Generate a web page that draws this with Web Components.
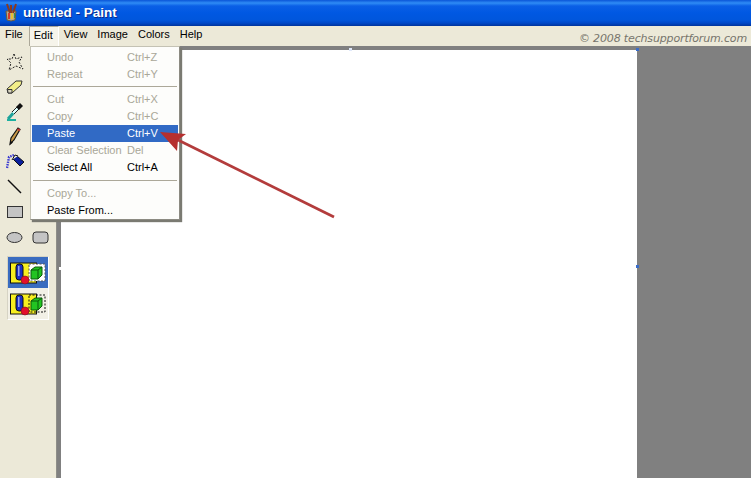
<!DOCTYPE html>
<html>
<head>
<meta charset="utf-8">
<title>untitled - Paint</title>
<style>
html, body { margin: 0; height: 100%; overflow: hidden; background: #808080; }
body { font: 11px "Liberation Sans", Arial, sans-serif; }
</style>
</head>
<body>
<paint-app>
  <title-bar>untitled - Paint</title-bar>
  <menu-bar></menu-bar>
  <tool-box></tool-box>
  <canvas-area></canvas-area>
  <edit-menu>
    <menu-item disabled keys="Ctrl+Z">Undo</menu-item>
    <menu-item disabled keys="Ctrl+Y">Repeat</menu-item>
    <menu-sep></menu-sep>
    <menu-item disabled keys="Ctrl+X">Cut</menu-item>
    <menu-item disabled keys="Ctrl+C">Copy</menu-item>
    <menu-item active keys="Ctrl+V">Paste</menu-item>
    <menu-item disabled keys="Del">Clear Selection</menu-item>
    <menu-item keys="Ctrl+A">Select All</menu-item>
    <menu-sep style="height:9px;padding-top:4px"></menu-sep>
    <menu-item disabled>Copy To...</menu-item>
    <menu-item>Paste From...</menu-item>
  </edit-menu>
</paint-app>

<script>
function define(name, html, extra) {
    customElements.define(name, class extends HTMLElement {
        constructor() {
            super();
            this.attachShadow({ mode: "open" });
            this.shadowRoot.innerHTML = html;
        }
        connectedCallback() {
            if (extra) extra(this);
        }
    });
}

define("paint-app", `
<style>
:host { display: grid; grid-template-columns: 56px 1fr; grid-template-rows: 26px 20px 1fr; width: 751px; height: 478px; position: relative; overflow: hidden; }
::slotted(title-bar), ::slotted(menu-bar) { grid-column: 1 / 3; }
svg { position: absolute; left: 0; top: 0; pointer-events: none; }
</style>
<slot></slot>
<svg width="751" height="478" viewBox="0 0 751 478">
  <line x1="334" y1="217" x2="176" y2="139" stroke="#b33c3c" stroke-width="2.8"/>
  <path d="M160 132 L186 134 L178 140 L177 151 Z" fill="#b5302f"/>
</svg>`);

define("title-bar", `
<style>
:host { display: flex; align-items: center; gap: 4px; height: 26px; padding: 0 0 2px 3px; box-sizing: border-box;
  background: linear-gradient(#0a55d8 0, #2f8cf5 3px, #0a5fe6 6px, #0058e2 13px, #0056dc 20px, #0048c8 23px, #00349c 26px);
  color: #fff; font: bold 13.5px "Liberation Sans", Arial, sans-serif; text-shadow: 1px 1px 0 #0a2c8c; }
svg { flex: none; }
</style>
<svg width="16" height="19" viewBox="0 0 16 19">
  <path d="M3 8 H13 L12 17 Q8 19 4 17 Z" fill="#b9a98a" stroke="#6a5a3a"/>
  <path d="M4 1 L7 10 M8 2 L8 10 M13 1 L10 10" stroke="#8a3b20" stroke-width="2"/>
  <path d="M5 10 H7 V16 H5 Z" fill="#d63a2a"/><path d="M8 10 H10 V16 H8 Z" fill="#e8c030"/><path d="M11 10 H12 V15 H11 Z" fill="#2f9a4a"/>
</svg>
<span><slot></slot></span>`);

define("menu-bar", `
<style>
:host { display: flex; align-items: flex-start; height: 20px; background: #ece9d8; position: relative;
  font: 11px "Liberation Sans", Arial, sans-serif; color: #000; }
b { font-weight: normal; padding: 0 5px; line-height: 17px; height: 18px; }
.open { background: #f6f4ea; border: solid #aca899; border-width: 1px 0 0 1px; border-right: 1px solid #fff; height: 19px; line-height: 16px; padding: 0 5px 0 4px; margin-left: 1px; }
.note { margin-left: auto; padding: 6px 4px 0 0; color: #77756c; font: italic 11px "DejaVu Sans", sans-serif; letter-spacing: -.15px; }
</style>
<b style="padding-left:5px">File</b><b class="open">Edit</b><b>View</b><b>Image</b><b>Colors</b><b>Help</b>
<span class="note">© 2008 techsupportforum.com</span>`);

define("tool-box", `
<style>
:host { display: block; background: #ece9d8; position: relative; }
.row { display: flex; gap: 9px; height: 25px; padding-left: 6px; align-items: center; }
.stack { margin: 6px 0 0 7px; width: 42px; height: 64px; border: 1px solid #f8f7f0; border-color: #d6d3c4 #fff #fff #d6d3c4; box-sizing: border-box; background: #f2f0e6; }
.stack div { height: 31px; display: flex; align-items: center; justify-content: center; }
.stack .on { background: #3a6cc0; }
</style>
<div style="height:3px"></div>
<div class="row">
  <svg width="18" height="18" viewBox="0 0 18 18"><path d="M8 1 L10 6 L16 4 L13 9 L17 16 L10 13 L3 17 L5 10 L1 6 L6 6 Z" fill="none" stroke="#222" stroke-dasharray="2 1.5"/></svg>
</div>
<div class="row">
  <svg width="18" height="16" viewBox="0 0 18 16"><path d="M1 10 L10 2 H16 L15 6 L6 14 H2 Z" fill="#f2ee88" stroke="#333"/><path d="M1.5 10.5 H6 L6 14 H2 Z" fill="#d8d4c0" stroke="#333"/></svg>
</div>
<div class="row">
  <svg width="18" height="20" viewBox="0 0 18 20"><path d="M2 17 L10 8" stroke="#1fa39a" stroke-width="3"/><path d="M1 18 H10" stroke="#1cb0a0" stroke-width="2"/><path d="M6 10 L12 4 L14 6 L8 12" fill="#dff" stroke="#222"/><path d="M10 5 L14 1 L17 4 L13 8 Z" fill="#111"/></svg>
</div>
<div class="row" style="margin-top:-1px">
  <svg width="18" height="20" viewBox="0 0 18 20"><path d="M4 18 L5 12 L12 2 L14 3.5 L8 14 Z" fill="#c99a4a" stroke="#111" stroke-width="1.2"/><path d="M4 19 L4.6 15 L7 16.5 Z" fill="#111"/><path d="M11.5 3 L14 4.5" stroke="#c33" stroke-width="1.6"/></svg>
</div>
<div class="row" style="padding-top:2px;height:23px">
  <svg width="20" height="16" viewBox="0 0 20 16"><path d="M1 14 L3 3 L8 1" fill="none" stroke="#3a3ad0" stroke-width="2.4" stroke-dasharray="1.5 1"/><path d="M7 5 L11 2 L18 8 L14 12 Z" fill="#0a1f9c" stroke="#111"/><path d="M6 6 L9 1 L12 2" fill="#eee" stroke="#111"/></svg>
</div>
<div class="row" style="margin-top:1px">
  <svg width="18" height="18" viewBox="0 0 18 18"><line x1="2" y1="2" x2="15" y2="15" stroke="#111" stroke-width="1.4"/></svg>
</div>
<div class="row">
  <svg width="18" height="14" viewBox="0 0 18 14"><rect x="1.5" y="1.5" width="15" height="11" fill="#c4c4c4" stroke="#333"/></svg>
</div>
<div class="row" style="margin-top:1px">
  <svg width="17" height="13" viewBox="0 0 17 13"><ellipse cx="8.5" cy="6.5" rx="7.5" ry="5" fill="#c4c4c4" stroke="#333"/></svg>
  <svg width="17" height="13" viewBox="0 0 17 13"><rect x="1" y="1" width="15" height="11" rx="3" fill="#c4c4c4" stroke="#333"/></svg>
</div>
<div class="stack">
  <div class="on"><sel-art boxed></sel-art></div>
  <div><sel-art></sel-art></div>
</div>`);

define("sel-art", `
<style>:host { display: block; width: 36px; height: 26px; } svg { display: block; }</style>
<svg width="36" height="26" viewBox="0 0 36 26">
  <rect x="0.5" y="3" width="26" height="20" fill="#f7ee20" stroke="#111"/>
  <rect class="box" x="19" y="4" width="16" height="17" fill="#fff" stroke="#555" stroke-dasharray="2 1.5"/>
  <rect x="6" y="4" width="7" height="16" rx="3" fill="#1b2fc4" stroke="#111"/>
  <rect x="8" y="6" width="1.5" height="10" fill="#9aa6ee"/>
  <circle cx="15" cy="20" r="4" fill="#e2102c" stroke="#7a1020" stroke-width=".6"/>
  <path d="M21 10 L25 7 H32 V15 L28 19 H21 Z" fill="#22c422" stroke="#0a5a0a"/>
  <path d="M21 10 H28 V19 M28 10 L32 7" fill="none" stroke="#0a5a0a"/>
</svg>`, (el) => {
    if (!el.hasAttribute("boxed")) {
        const box = el.shadowRoot.querySelector(".box");
        box.setAttribute("fill", "none");
        box.setAttribute("stroke", "#111");
    }
});

define("canvas-area", `
<style>
:host { display: block; background: #808080; position: relative; border-left: 1px solid #8e8e88; box-sizing: border-box; }
.top { height: 4px; }
.page { width: 576px; height: 100%; margin-left: 4px; background: #fff; }
.h { position: absolute; width: 3px; height: 3px; background: #3a6cc8; }
</style>
<div class="top"></div>
<div class="page"></div>
<i class="h" style="left:292px;top:2px;background:#dfe8fa"></i>
<i class="h" style="left:579px;top:2px"></i>
<i class="h" style="left:2px;top:221px;background:#fff"></i>
<i class="h" style="left:579px;top:219px"></i>`);

define("edit-menu", `
<style>
:host { position: absolute; left: 30px; top: 46px; width: 150px; height: 174px; box-sizing: border-box; padding: 2px 1px 0 1px;
  background: #fdfdfb; border: 1px solid #c4c2b4; border-right-color: #8c8b82; border-bottom-color: #8c8b82; box-shadow: 2px 2px 1px #7a7a72; }
</style>
<slot></slot>`);

define("menu-item", `
<style>
:host { display: flex; height: 17px; line-height: 17px; padding-left: 15px; color: #000; font: 11px/17px "Liberation Sans", Arial, sans-serif; }
:host([disabled]) { color: #a9a798; }
:host([active]) { background: #316ac5; color: #fff; }
.t { width: 80px; white-space: nowrap; }
</style>
<span class="t"><slot></slot></span><span class="k"></span>`, (el) => {
    el.shadowRoot.querySelector(".k").textContent = el.getAttribute("keys") || "";
});

define("menu-sep", `
<style>
:host { display: block; height: 8px; padding-top: 3px; box-sizing: border-box; }
div { height: 1px; margin: 0 1px; background: #aca899; }
</style>
<div></div>`);
</script>
</body>
</html>
